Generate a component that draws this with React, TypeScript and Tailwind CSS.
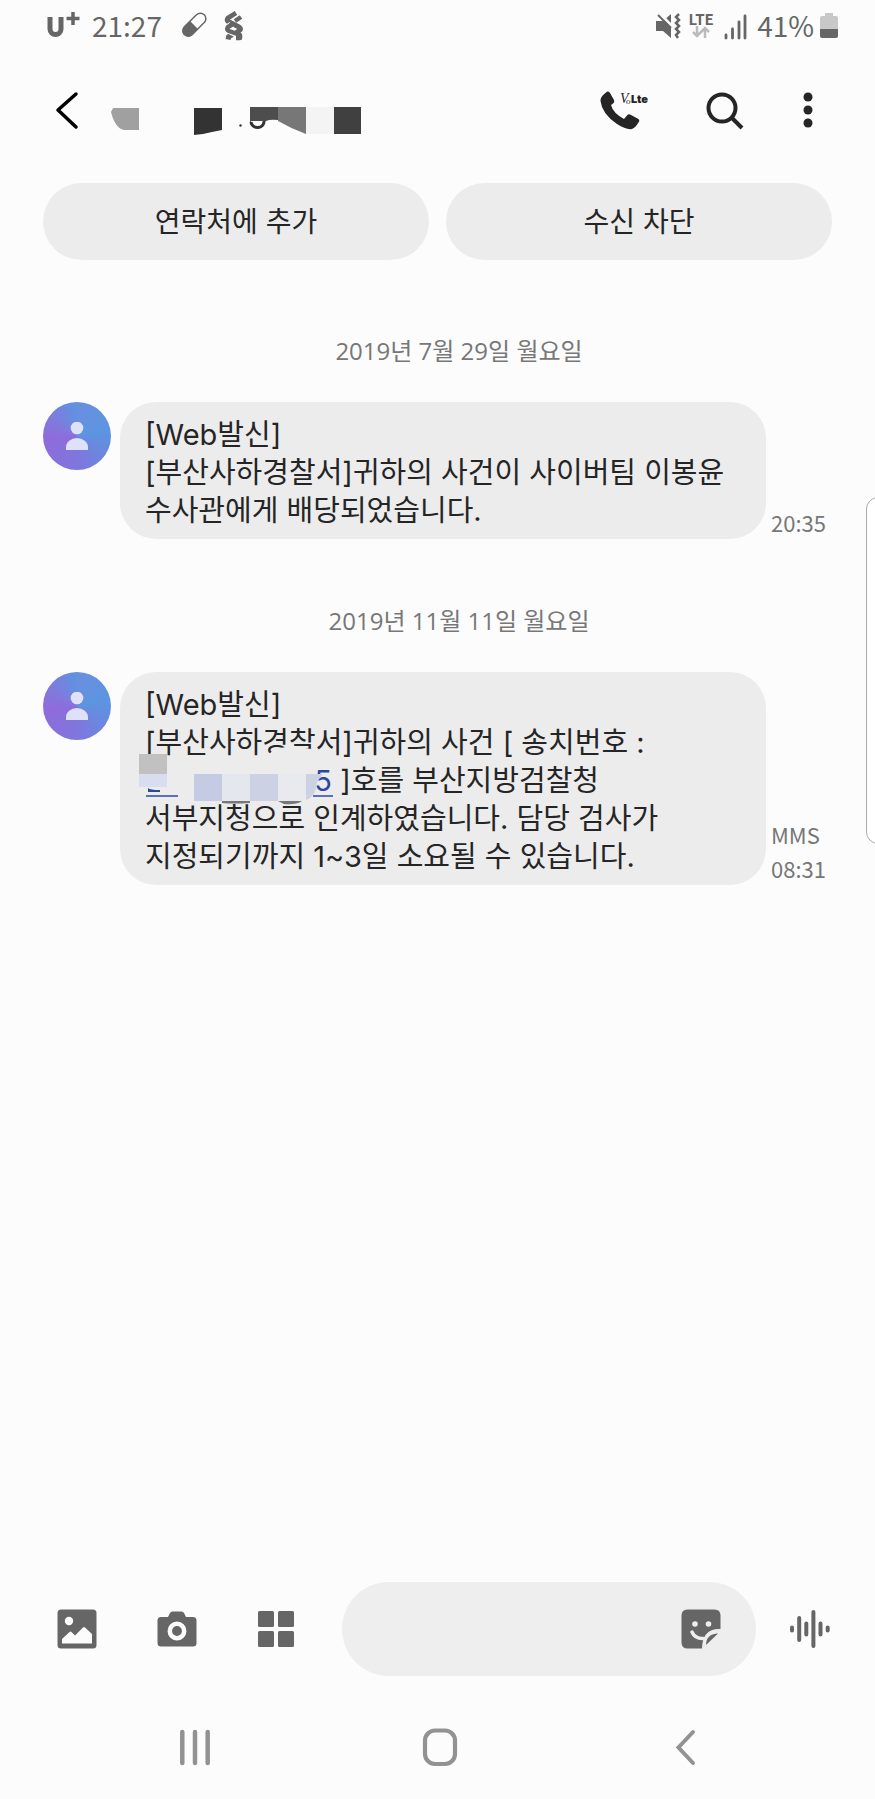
import React from 'react';

interface Message {
  id: number;
  date: string;
  time: string;
  kind?: string;
  body: React.ReactNode;
}

const StatusBar: React.FC = () => (
  <div className="flex h-[52px] items-center justify-between pb-[3px] pl-[46px] pr-[37px] text-[28px] leading-8 text-[#666]">
    <div className="flex items-center">
      <svg className="h-8 w-[34px]" viewBox="0 0 34 32" fill="none" stroke="currentColor" role="img" aria-label="U+">
        <path d="M4 8v12a5.500 5.500 0 0 0 11 0V8" strokeWidth="5" />
        <path d="M27 3v13M20.500 9.500h13" strokeWidth="3.500" />
      </svg>
      <time className="ml-3">21:27</time>
      <svg className="ml-[18px] h-8 w-7" viewBox="0 0 28 32">
        <g transform="rotate(-45 14 16)">
          <rect x="0.500" y="10.500" width="28" height="11" rx="5.500" fill="none" stroke="currentColor" strokeWidth="1.500" />
          <path d="M14 10H6a6 6 0 0 0 0 12h8z" fill="currentColor" />
        </g>
      </svg>
      <svg className="ml-4 h-8 w-5" viewBox="0 0 20 32" fill="none" strokeLinejoin="round">
        <path d="M12 4 4 9q-2 3 1 4l10 5q3 2 0 4L4 28" stroke="currentColor" strokeWidth="5" />
        <path d="m16 8-5 3M8 15l-4 3q-2 3 1 4l11 5-5 3" stroke="#fcfcfc" strokeWidth="6" />
        <path d="m17 8-6 4M9 15l-5 3q-2 3 1 4l11 4v3h-4" stroke="currentColor" strokeWidth="4.500" />
        <path d="M6 13l9 5q3 2 0 4l-4 2" stroke="currentColor" strokeWidth="4" />
        <path d="M2 28l5 1" stroke="currentColor" strokeWidth="4" />
      </svg>
    </div>
    <div className="flex items-center">
      <svg className="h-8 w-7" viewBox="0 0 28 32" fill="none">
        <path d="M1 12h7l8-7v24l-8-7H1z" fill="currentColor" />
        <path d="M3 3 18 18" stroke="#fcfcfc" strokeWidth="3" />
        <path d="m3 6 13 13" stroke="currentColor" strokeWidth="2" />
        <path d="M24 5l-3 3 3 3-3 3 3 3-3 3 3 3-3 3 2 3" stroke="currentColor" strokeWidth="2.500" />
      </svg>
      <div className="ml-1 flex w-7 flex-col items-center">
        <span className="text-[15px] font-bold leading-[14px]">LTE</span>
        <svg className="h-3 w-5" viewBox="0 0 20 12" fill="none" stroke="#bbb" strokeWidth="2.500">
          <path d="M6 0v10M2 6l4 4 4-4M14 12V2M10 6l4-4 4 4" />
        </svg>
      </div>
      <svg className="ml-2 h-8 w-6" viewBox="0 0 24 32" fill="none" stroke="currentColor" strokeWidth="2.800" strokeLinecap="round">
        <path d="M3 26v3M9.500 20v9M16 13v16M22 7v22" />
      </svg>
      <span className="ml-[10px]">41%</span>
      <svg className="ml-[6px] h-8 w-[18px]" viewBox="0 0 18 32">
        <path d="M5 4h8v3h3a2 2 0 0 1 2 2v12H0V9a2 2 0 0 1 2-2h3z" fill="#c8c8c8" />
        <path d="M0 20h18v7a2 2 0 0 1-2 2H2a2 2 0 0 1-2-2z" fill="currentColor" />
      </svg>
    </div>
  </div>
);

// Sender number, blurred out in blocks
const HiddenSender: React.FC = () => (
  <svg className="h-8 w-[252px]" viewBox="0 0 252 32" role="img" aria-label="가려진 발신번호">
    <path d="M2 4h26v22H13Q4 24 0 8z" fill="#a0a0a0" />
    <path d="M83 4h28v22l-10 2-9 2-9 1z" fill="#333" />
    <circle cx="129.500" cy="21.500" r="1.200" fill="#333" />
    <path d="M167 3h28v27q-14-5-28-13z" fill="#777" />
    <path d="M139 3h28v13q-8-1-12 1h-15l-1 4z" fill="#4d4d4d" />
    <path d="M141 18q5 1 11-1l-3 5h-6z" fill="#fcfcfc" />
    <path d="M140 18a6.500 6 0 0 0 13-1" fill="none" stroke="#333" strokeWidth="3" />
    <path d="M195 3h28v27h-28z" fill="#f4f4f4" />
    <path d="M223 3h27v27h-27z" fill="#404040" />
  </svg>
);

const Header: React.FC = () => (
  <header className="flex h-[131px] items-start pl-[43px] pr-[44px] pt-8">
    <button type="button" aria-label="뒤로" className="flex h-[52px] w-12 items-center justify-center">
      <svg className="h-10 w-6" viewBox="0 0 24 40" fill="none" stroke="#000" strokeWidth="3.500" strokeLinecap="round" strokeLinejoin="round">
        <path d="M21 4 3 20l18 17" />
      </svg>
    </button>
    <h1 className="ml-5 mt-5 flex-1">
      <HiddenSender />
    </h1>
    <button type="button" aria-label="전화 걸기" className="mr-[53px] flex h-[52px] w-12 items-center text-[#252525]">
      <svg className="h-10 w-12" viewBox="0 0 48 40">
        <path
          d="M6 2.500Q8 .500 10 3l4 7q1 2-1 3.500l-2 1.500q2 8 13 14l3-3.500q1.500-2 4-.500l6.500 3.500q3 1.500 1 4-3 5-6.500 6.500-6 1-15-5Q2 24 .500 11 0 7 6 2.500z"
          fill="currentColor"
        />
        <text x="20" y="13" fontFamily="Liberation Serif, serif" fontStyle="italic" fontSize="14" fill="currentColor">V</text>
        <text x="26" y="14" fontFamily="Liberation Serif, serif" fontStyle="italic" fontSize="9" fill="currentColor">o</text>
        <text x="31" y="13" fontFamily="Inter, sans-serif" fontWeight="900" fontSize="11" fill="currentColor">Lte</text>
      </svg>
    </button>
    <button type="button" aria-label="검색" className="mr-9 flex h-[52px] w-12 items-center justify-center text-[#252525]">
      <svg className="h-10 w-10" viewBox="0 0 40 40" fill="none" stroke="currentColor" strokeWidth="4">
        <circle cx="17" cy="18" r="13.500" />
        <path d="m27 28 10 10" />
      </svg>
    </button>
    <button type="button" aria-label="옵션 더보기" className="flex h-[52px] w-[46px] items-center justify-center text-[#252525]">
      <svg className="h-10 w-3" viewBox="0 0 12 40" fill="currentColor">
        <circle cx="6" cy="7" r="4.500" />
        <circle cx="6" cy="20" r="4.500" />
        <circle cx="6" cy="33" r="4.500" />
      </svg>
    </button>
  </header>
);

const Avatar: React.FC = () => (
  <div className="flex size-[68px] shrink-0 items-center justify-center rounded-full bg-[conic-gradient(#6a8ee0_0deg,#5b95e0_80deg,#7f76dd_180deg,#8f6bdb_265deg,#7f7bdd_305deg,#5f92e0_360deg)]">
    <svg className="h-7 w-6" viewBox="0 0 24 28" fill="#dfe1f8">
      <circle cx="12" cy="6" r="6.300" />
      <path d="M1 28v-3a11 9 0 0 1 22 0v3z" />
    </svg>
  </div>
);

// Case number link, only its last digit is left readable
const HiddenCaseNumber: React.FC = () => (
  <a href="#case" aria-label="가려진 송치번호" className="relative inline-block w-[187px] text-right text-[#2b479f]">
    5
    <svg className="absolute -left-[6px] -top-[17px] h-16 w-[196px]" viewBox="0 0 196 64">
      <path d="M0 12h126q8-7 14-9 22-3 43 4l-6 12H0z" fill="#ececec" />
      <path d="M0 9h28v20H0z" fill="#c1c1c1" />
      <path d="M0 29h28v13H0z" fill="#d9ddf0" />
      <path d="M9 43q2 2 12 2v2H9z" fill="#2b479f" />
      <path d="M7 51h32" stroke="#2b479f" strokeWidth="1.500" />
      <path d="M174 51h20" stroke="#2b479f" strokeWidth="1.500" />
      <path d="M55 29h28v27H55z" fill="#c4cbe2" />
      <path d="M83 29h28v27H83z" fill="#e5e7ee" />
      <path d="M111 29h28v27h-28z" fill="#ccd2e4" />
      <path d="M139 29h28v27h-28z" fill="#e9eaee" />
      <path d="M167 29h17l-6 8q-1 9-4 13-3 4-7 5z" fill="#ccd2e4" />
      <path d="M83 56h28v2q-18 1-28 0zM139 56h24q-6 4-18 3z" fill="#777" />
    </svg>
  </a>
);

const messages: Message[] = [
  {
    id: 1,
    date: '2019년 7월 29일 월요일',
    time: '20:35',
    body: (
      <>
        [Web발신]
        <br />
        [부산사하경찰서]귀하의 사건이 사이버팀 이봉윤 수사관에게 배당되었습니다.
      </>
    ),
  },
  {
    id: 2,
    date: '2019년 11월 11일 월요일',
    time: '08:31',
    kind: 'MMS',
    body: (
      <>
        [Web발신]
        <br />
        [부산사하경찰서]귀하의 사건 [ 송치번호 : <HiddenCaseNumber /> ]호를 부산지방검찰청 서부지청으로 인계하였습니다. 담당 검사가
        지정되기까지 1~3일 소요될 수 있습니다.
      </>
    ),
  },
];

const MessageItem: React.FC<{ message: Message }> = ({ message }) => (
  <section>
    <h2 className="pl-[43px] text-center font-['Open_Sans','Noto_Sans_CJK_KR',sans-serif] text-2xl leading-8 text-[#777]">{message.date}</h2>
    <div className="mt-[35px] flex pl-[43px]">
      <Avatar />
      <p className="ml-[9px] flex-1 break-keep rounded-[36px] bg-[#ececec] pb-[9px] pl-[25px] pr-5 pt-[14px] font-['Inter','Noto_Sans_CJK_KR',sans-serif] text-[29px] leading-[38px] text-[#252525]">
        {message.body}
      </p>
      <div className="ml-[5px] flex w-[104px] flex-col justify-end text-[22px] leading-[34px] text-[#777]">
        {message.kind && <span>{message.kind}</span>}
        <time>{message.time}</time>
      </div>
    </div>
  </section>
);

const Composer: React.FC = () => (
  <form className="flex h-[94px] items-stretch pl-[27px] pr-[11px] text-[#666]" onSubmit={(e) => e.preventDefault()}>
    <button type="button" aria-label="사진" className="flex w-[100px] items-center justify-center">
      <svg className="size-10" viewBox="0 0 40 40" fill="currentColor">
        <rect x="0.500" y="0.500" width="39" height="39" rx="3.500" />
        <circle cx="12" cy="12" r="4.200" fill="#fcfcfc" />
        <path d="M5 30l7.500-7q1-.8 2 0l3.500 3.500 8-8q1-1 2 0L35 25v9.500H5z" fill="#fcfcfc" />
      </svg>
    </button>
    <button type="button" aria-label="카메라" className="flex w-[100px] items-center justify-center">
      <svg className="size-10" viewBox="0 0 40 40" fill="currentColor">
        <path d="M4 8h7l2-4q.8-1.500 2.500-1.500h9Q26 2.500 27 4l2 4h7q3.500 0 3.500 3.500V34q0 3.500-3.500 3.500H4Q.500 37.500.500 34V11.500Q.500 8 4 8z" />
        <circle cx="20" cy="22" r="7.200" fill="currentColor" stroke="#fcfcfc" strokeWidth="4.500" />
      </svg>
    </button>
    <button type="button" aria-label="더보기" className="flex w-[100px] items-center justify-center">
      <svg className="size-10" viewBox="0 0 40 40" fill="currentColor">
        <rect x="1" y="2" width="16" height="16" rx="1.500" />
        <rect x="21" y="2" width="16" height="16" rx="1.500" />
        <rect x="1" y="22" width="16" height="16" rx="1.500" />
        <rect x="21" y="22" width="16" height="16" rx="1.500" />
      </svg>
    </button>
    <div className="ml-[15px] flex min-w-0 flex-1 items-center rounded-full bg-[#eee] pl-8 pr-[35px]">
      <input type="text" aria-label="메시지 입력" className="min-w-0 flex-1 bg-transparent text-[29px] text-[#252525] outline-none" />
      <button type="button" aria-label="스티커">
        <svg className="size-10" viewBox="0 0 40 40" fill="currentColor">
          <path d="M6.500.500h27q6 0 6 6V20q-18-1-18.500 19.500H6.500q-6 0-6-6v-27q0-6 6-6z" />
          <circle cx="14" cy="15" r="2.800" fill="#eee" />
          <circle cx="27.500" cy="15" r="2.800" fill="#eee" />
          <path d="M11 23q3 7 11.500 6.500" fill="none" stroke="#eee" strokeWidth="3.500" strokeLinecap="round" />
          <path d="M25 36q0-11 12-11.500z" />
        </svg>
      </button>
    </div>
    <button type="button" aria-label="음성 녹음" className="flex w-[108px] items-center justify-center">
      <svg className="size-10" viewBox="0 0 40 40" fill="none" stroke="currentColor" strokeWidth="4" strokeLinecap="round">
        <path d="M2 18.500v3M9.200 9v22M16.300 14.500v11M23.400 3v34M30.500 14.500v11M37.700 18.500v3" />
      </svg>
    </button>
  </form>
);

const NavBar: React.FC = () => (
  <nav className="grid h-[123px] grid-cols-3 items-start justify-items-center pl-[72px] pr-[68px] pt-[51px] text-[#929292]">
    <button type="button" aria-label="최근 앱">
      <svg className="size-10" viewBox="0 0 40 40" fill="none" stroke="currentColor" strokeWidth="4.500" strokeLinecap="round">
        <path d="M7.300 5v31M20 5v31M32.700 5v31" />
      </svg>
    </button>
    <button type="button" aria-label="홈">
      <svg className="size-10" viewBox="0 0 40 40" fill="none" stroke="currentColor" strokeWidth="4.200">
        <rect x="5" y="3.500" width="30" height="33.500" rx="10" />
      </svg>
    </button>
    <button type="button" aria-label="뒤로 가기">
      <svg className="size-10" viewBox="0 0 40 40" fill="none" stroke="currentColor" strokeWidth="4" strokeLinecap="round" strokeLinejoin="miter">
        <path d="M28 5 13.500 20.500 28 36" />
      </svg>
    </button>
  </nav>
);

const App: React.FC = () => {
  return (
    <div className="relative flex min-h-screen flex-col overflow-hidden bg-[#fcfcfc] font-['Noto_Sans_CJK_KR',sans-serif]">
      <StatusBar />
      <Header />

      <div className="grid grid-cols-2 gap-[17px] px-[43px] font-['Inter','Noto_Sans_CJK_KR',sans-serif] text-[28px] text-[#252525]">
        <button type="button" className="h-[77px] rounded-full bg-[#ececec]">연락처에 추가</button>
        <button type="button" className="h-[77px] rounded-full bg-[#ececec]">수신 차단</button>
      </div>

      <main className="flex flex-1 flex-col gap-[66px] pt-[75px]">
        {messages.map((message) => (
          <MessageItem key={message.id} message={message} />
        ))}
      </main>

      {/* Edge panel peeking in from the right */}
      <div className="absolute -right-3 top-[497px] h-[347px] w-[21px] rounded-l-xl border border-[#aaa] bg-white" />

      <Composer />
      <NavBar />
    </div>
  );
};

export default App;
